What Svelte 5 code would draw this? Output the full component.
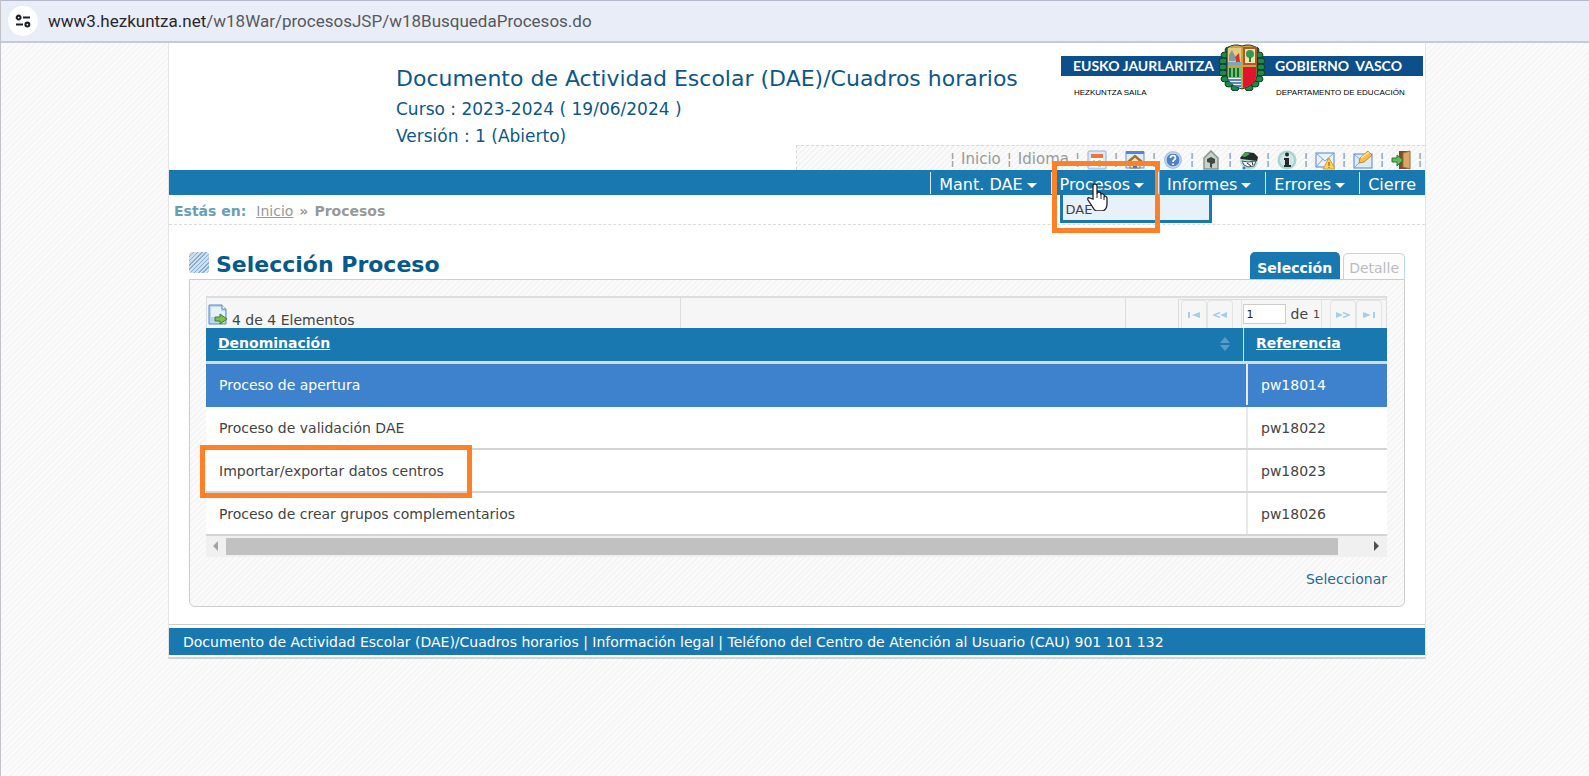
<script>
  const menus = ['Mant. DAE', 'Procesos', 'Informes', 'Errores', 'Cierre'];
  const rows = [
    { name: 'Proceso de apertura', ref: 'pw18014' },
    { name: 'Proceso de validación DAE', ref: 'pw18022' },
    { name: 'Importar/exportar datos centros', ref: 'pw18023' },
    { name: 'Proceso de crear grupos complementarios', ref: 'pw18026' }
  ];
  const tools = ['calendar', 'home', 'help', 'house', 'school', 'info', 'alert', 'edit', 'exit'];
  const laurels = [[9, 7], [5, 12], [3, 18], [3, 24], [3, 30], [5, 36], [9, 41], [15, 45]];
  let selected = $state(0);
</script>

<div class="screen">
  <div class="urlbar">
    <button class="site" aria-label="site">
      <svg width="16" height="14" viewBox="0 0 18 16" fill="none" stroke="#1d1f24" stroke-width="2.4">
        <circle cx="4" cy="4" r="2.2" /><path d="M9 4h8M1 12h8" /><circle cx="14" cy="12" r="2.2" />
      </svg>
    </button>
    <span class="url"><span class="host">www3.hezkuntza.net</span>/w18War/procesosJSP/w18BusquedaProcesos.do</span>
  </div>

  <div class="page">
    <header>
      <div class="titles">
        <h1>Documento de Actividad Escolar (DAE)/Cuadros horarios</h1>
        <p>Curso : 2023-2024 ( 19/06/2024 )</p>
        <p>Versión : 1 (Abierto)</p>
      </div>
      <div class="brand">
        <div class="band"><span>EUSKO JAURLARITZA</span><span>GOBIERNO&nbsp; VASCO</span></div>
        <div class="depts"><span>HEZKUNTZA SAILA</span><span>DEPARTAMENTO DE EDUCACIÓN</span></div>
        <svg class="crest" width="48" height="48" viewBox="0 0 48 48">
          <g fill="#1c8a4a" stroke="#0b3d25" stroke-width="1">
            {#each laurels as [x, y]}
              <ellipse cx={x + 2} cy={y} rx="4" ry="3" /><ellipse cx={46 - x} cy={y} rx="4" ry="3" />
            {/each}
          </g>
          <path d="M9 5Q16 0 24 3Q32 0 39 5V33Q38 42 24 46Q10 42 9 33Z" fill="#c7a544" stroke="#2b3520" />
          <path d="M10 5h13v17H10z" fill="#e3cd80" /><path d="M26 5h12v16H26z" fill="#f0e4b0" stroke="#b5562a" stroke-width="2" />
          <path d="M11 18v-6l3-5 3 6v5z" fill="#84999a" /><path d="M18 19l-1-5 4-4 1 9z" fill="#db3028" /><path d="M10 19h13v3H10z" fill="#7fa4b8" />
          <circle cx="32" cy="11" r="4" fill="#2d9c4c" /><path d="M31 14h2v5h-2z" fill="#2d7c3c" />
          <path d="M10 24h13v11H10z" fill="#7cc06c" /><path d="M12 34v-9m4 9v-9m4 9v-9" stroke="#146d38" stroke-width="2" />
          <path d="M10 35h13v10Q12 42 10 35" fill="#e9f3fa" /><path d="M10 37h13M12 40h11M15 43h8" stroke="#2967a2" stroke-width="1.4" />
          <path d="M25 24h13v10q-1 8-13 11z" fill="#e0142c" />
        </svg>
      </div>
      <div class="tools">
        <span>¦</span><a href="#inicio">Inicio</a><span>¦</span><a href="#idioma">Idioma</a><span>¦</span>
        {#each tools as t}
          <button class="tool" aria-label={t}>
            <svg width="20" height="20" viewBox="0 0 20 20">
              {#if t === 'calendar'}
                <rect x="1" y="1" width="18" height="18" rx="1" fill="#dce9f8" stroke="#8fb0dc" /><rect x="4" y="4" width="12" height="13" fill="#fff" /><rect x="4" y="4" width="12" height="4" fill="#ef753d" /><path d="M6 11h2v5m3-5h3v5h-3z" fill="none" stroke="#6ba873" />
              {:else if t === 'home'}
                <rect x="1" y="2" width="18" height="16" fill="#dfeafa" stroke="#6b91cf" /><path d="M1 1h18v3H1z" fill="#5485d0" /><path d="M5 11v7h10v-7l-5-4z" fill="#f6e4c0" stroke="#8f7652" /><path d="M3 12l7-6 7 6" fill="none" stroke="#a5702f" stroke-width="2.4" /><path d="M8 13h4v5H8z" fill="#487bb9" />
              {:else if t === 'help'}
                <circle cx="10" cy="10" r="9" fill="#a9c5e8" /><circle cx="10" cy="10" r="7" fill="#4f82c6" stroke="#d9e7f8" /><path d="M7.500 8q0-2.500 2.500-2.500T12.500 8q0 1-1.500 2-1 .5-1 2m0 1.500V15" fill="none" stroke="#fff" stroke-width="1.700" />
              {:else if t === 'house'}
                <path d="M3 19V8l7-7 7 7v11z" fill="#c7d1ca" stroke="#86958c" stroke-width="1.500" /><path d="M6 9l4-2 4 2v4l-3 1v4l-2-1v-4l-3-1z" fill="#414743" />
              {:else if t === 'school'}
                <circle cx="10" cy="11" r="9" fill="#b5dde0" /><path d="M1 8l5-6 9 1 4 4-1 4-8-1-8-1z" fill="#242b28" /><path d="M2 6l5-4 4 2-5 3z" fill="#4aa254" /><path d="M3 11l6 1 8-1-2 5-6 1-4-2z" fill="#f3f3ef" stroke="#4a5a5a" /><path d="M8 13l4 3M13 12l1 3" stroke="#333" /><circle cx="5" cy="18" r="1.500" fill="#3d77d0" />
              {:else if t === 'info'}
                <circle cx="10" cy="10" r="9.500" fill="#a9d3d2" /><circle cx="10" cy="10" r="7" fill="#d2e6e4" /><circle cx="10" cy="4.500" r="2" fill="#202b2b" /><path d="M7 8h5v7h2v2H7v-2h1v-5H7z" fill="#202b2b" />
              {:else if t === 'alert'}
                <rect x="1" y="3" width="18" height="14" fill="#e9f2fd" stroke="#5583c5" /><path d="M1 3l9 8 9-8M1 17l7-8m4 0l7 8" fill="none" stroke="#7ba1d2" /><path d="M14 8l6 11H8z" fill="#ffd45b" stroke="#d89a24" /><path d="M14 12v4m0 1v1" stroke="#7a4c00" />
              {:else if t === 'edit'}
                <rect x="1" y="4" width="18" height="14" fill="#dceafa" stroke="#5583c5" /><path d="M2 5l8 7 8-7M2 17l6-6" fill="none" stroke="#8aaedb" /><path d="M6 13l1-5 8-7 4 4-8 7z" fill="#f7bf45" stroke="#c48725" /><path d="M8 8l8-6" stroke="#ffe7a0" stroke-width="1.500" />
              {:else}
                <path d="M8 1h10v18H8z" fill="#7d4d28" /><path d="M12 3l7-2v18l-7-2z" fill="#dca666" stroke="#a36c35" /><path d="M1 8h5V5l6 5-6 6v-4H1z" fill="#5cbf4e" stroke="#2d7934" />
              {/if}
            </svg>
          </button><span class="sep">¦</span>
        {/each}
      </div>
    </header>

    <nav>
      {#each menus as m, i}
        <div class="item">
          <button class="menu">{m}{#if i < 4}<i class="caret"></i>{/if}</button>
          {#if i === 1}
            <a class="sub" href="#dae">DAE</a>
            <div class="mark markmenu"></div>
            <svg class="hand" width="22" height="28" viewBox="0 0 22 28"><path d="M7 16V3q0-2 2-2t2 2v8q0-2 2-2t2 3q0-2 2-1t1 3q2-2 3 1v6q0 5-4 7h-7q-2-1-4-5l-4-6q-1-3 2-2z" fill="#fff" stroke="#222" stroke-width="1.3" /><path d="M11 11v4m4-3v4m3-2v3" stroke="#222" /></svg>
          {/if}
        </div>
      {/each}
    </nav>

    <div class="crumbs"><b class="here">Estás en:</b><a href="#inicio">Inicio</a><b>»</b><b>Procesos</b></div>

    <main>
      <div class="headrow">
        <i class="hatch"></i>
        <h2>Selección Proceso</h2>
        <div class="tabs"><button class="tab on">Selección</button><button class="tab" disabled>Detalle</button></div>
      </div>
      <section class="panel">
        <div class="bar">
          <div class="count">
            <svg width="20" height="21" viewBox="0 0 20 21"><path d="M1 1h13l4 4v15H1z" fill="#b9d6f5" stroke="#5888c4" /><path d="M3 3h10v4h4v6H3z" fill="#e6f1fd" /><path d="M14 1v4h4" fill="#fff" stroke="#5888c4" /><path d="M7 13h5v-3l7 5-7 5v-3H7z" fill="#7fc050" stroke="#39802b" /></svg>
            <span>4 de 4 Elementos</span>
          </div>
          <div class="blank"></div>
          <div class="blank small"></div>
          <div class="pager">
            <button aria-label="first"><svg width="12" height="6" viewBox="0 0 12 6"><path d="M0 0h2v6H0zM12 0v6L4 3z" /></svg></button>
            <button aria-label="previous"><svg width="14" height="6" viewBox="0 0 14 6"><path d="M14 0v6L7 3z" /><path d="M7 0.500L1 3l6 2.500" fill="none" stroke="#a4cfe4" stroke-width="1.500" /></svg></button>
            <label><input aria-label="page" value="1" /> de <small>1</small></label>
            <button aria-label="next"><svg width="14" height="6" viewBox="0 0 14 6"><path d="M0 0v6l7-3z" /><path d="M7 0.500L13 3 7 5.500" fill="none" stroke="#a4cfe4" stroke-width="1.500" /></svg></button>
            <button aria-label="last"><svg width="12" height="6" viewBox="0 0 12 6"><path d="M10 0h2v6h-2zM0 0v6l8-3z" /></svg></button>
          </div>
        </div>
        <div class="thead">
          <a href="#den">Denominación</a>
          <svg width="10" height="14" viewBox="0 0 10 14" fill="#5a9cc9"><path d="M5 0l5 6H0zM5 14l5-6H0z" /></svg>
          <div class="refhead"><a href="#ref">Referencia</a></div>
        </div>
        <table>
          <tbody>
            {#each rows as r, i}
              <tr class:sel={selected === i} onclick={() => (selected = i)}>
                <td>{r.name}{#if i === 2}<div class="mark markrow"></div>{/if}</td>
                <td class="ref">{r.ref}</td>
              </tr>
            {/each}
          </tbody>
        </table>
        <div class="scroll"><i class="arrow left"></i><div class="track"><div class="thumb"></div></div><i class="arrow right"></i></div>
        <div class="actions"><a href="#sel">Seleccionar</a></div>
      </section>
    </main>
    <footer><div>Documento de Actividad Escolar (DAE)/Cuadros horarios | Información legal | Teléfono del Centro de Atención al Usuario (CAU) 901 101 132</div></footer>
  </div>
</div>

<style>
  :global(body) { margin: 0; }
  * { box-sizing: border-box; }
  button { font: inherit; border: 0; padding: 0; background: none; color: inherit; }
  .screen {
    min-height: 100vh;
    border-left: 1px solid #c2c3c9;
    font: 14px/20px "DejaVu Sans", Verdana, sans-serif;
    color: #444;
    background: repeating-linear-gradient(135deg, #fbfbfb 0 2px, #f6f6f6 2px 4px);
  }
  .urlbar { display: flex; align-items: center; gap: 10px; height: 43px; padding: 0 7px 1px; background: #e9edf7; border-top: 1px solid #b5b8cc; border-bottom: 2px solid #c6cad4; }
  .site { display: grid; place-items: center; width: 30px; height: 30px; border-radius: 50%; background: #fff; }
  .url { font: 17px/24px Roboto, "Noto Sans", sans-serif; color: #55585e; }
  .host { color: #26282d; }
  .page { margin: 0 163px 0 167px; background: #fff; border: 1px solid #e4e4e4; border-top: 0; border-bottom: 2px solid #d2d2d2; }
  header { display: grid; grid-template-columns: 1fr 364px; height: 127px; grid-template-rows: 102px 25px; }
  .titles { padding: 22px 0 0 227px; color: #0d5788; white-space: nowrap; }
  h1 { margin: 0 0 3px; font-size: 22px; line-height: 28px; font-weight: 400; }
  p { margin: 0; font-size: 17px; line-height: 27px; }
  .brand { position: relative; padding: 13px 2px 0 0; }
  .band { display: grid; grid-template-columns: 202px 1fr; height: 20px; padding-left: 12px; background: #0d4f8b; color: #fff; font: 700 14px/20px Lato, sans-serif; white-space: nowrap; }
  .depts { display: grid; grid-template-columns: 202px 1fr; padding: 10px 0 0 13px; font: 8px/14px "Liberation Sans", sans-serif; color: #000; white-space: nowrap; }
  .crest { position: absolute; left: 157px; top: 0; }
  .tools { grid-column: 2; justify-self: end; display: flex; align-items: center; justify-content: flex-end; width: 629px; padding-right: 3px; font-size: 15px; line-height: 26px; color: #999; border: 1px dashed #d8d8d8; border-width: 1px 0 0 1px; background: repeating-linear-gradient(135deg, #fbfbfb 0 2px, #f4f4f4 2px 4px); }
  .tools a { color: #999; text-decoration: none; margin: 0 6px; }
  .tools span, .tools a { padding-top: 2px; }
  .tool { display: flex; margin: 4px 7px 0; }
  .sep { width: 4px; display: flex; justify-content: center; }
  nav { display: flex; justify-content: flex-end; height: 25px; background: #1978b0; color: #fff; font-size: 16px; }
  .item { position: relative; display: flex; }
  .item::before { content: ""; width: 1px; margin: 2px 0 1px; background: #d6e8f3; }
  .menu { display: flex; align-items: center; padding: 5px 14px 0 8px; line-height: 20px; }
  .item:last-child .menu { padding-right: 9px; }
  .caret { margin-left: 4px; border: 5px solid transparent; border-top-color: #fff; border-bottom: 0; }
  .sub { position: absolute; left: 9px; top: 25px; width: 152px; height: 28px; padding-left: 3px; border: 3px solid #1978b0; border-top: 0; background: #e6f1fa; color: #444; font-size: 13px; line-height: 29px; text-decoration: none; }
  .mark { position: absolute; border: 5px solid #ff8026; pointer-events: none; }
  .markmenu { left: 1px; top: -9px; width: 108px; height: 72px; }
  .hand { position: absolute; left: 35px; top: 13px; }
  .crumbs { display: flex; gap: 6px; align-items: center; height: 30px; padding: 2px 0 0 5px; border-bottom: 1px dashed #ddd; color: #999; }
  .here { color: #669fb5; margin-right: 4px; }
  .crumbs a { color: #999; }
  main { padding: 27px 20px 17px; }
  .headrow { display: flex; height: 27px; }
  .hatch { width: 20px; height: 21px; margin-right: 7px; border-radius: 3px; background: repeating-linear-gradient(135deg, #88aed4 0 1px, #cfdff0 1px 3px); }
  h2 { margin: 0; font-size: 22px; line-height: 26px; color: #055a8c; }
  .tabs { display: flex; gap: 3px; margin-left: auto; align-items: flex-end; }
  .tab { height: 26px; padding: 3px 5px 0; border: 1px solid #b9d7e9; border-bottom: 0; border-radius: 5px 5px 0 0; background: #fcfcfc; color: #bbb; }
  .tab.on { height: 27px; padding: 3px 7px 0 6px; background: #1978b0; border-color: #1978b0; color: #fff; font-weight: 700; }
  .panel { padding: 16px 17px 17px 16px; border: 1px solid #ccc; border-radius: 0 0 6px 6px; background: repeating-linear-gradient(135deg, #fbfbfb 0 2px, #f5f5f5 2px 4px); }
  .bar { display: flex; height: 32px; background: #f6f6f6; border: 1px solid #ddd; border-top-width: 2px; border-bottom: 0; }
  .count { display: flex; align-items: flex-end; gap: 4px; flex: 474; padding: 0 0 1px 1px; }
  .count span { line-height: 14px; }
  .count svg { margin-bottom: 2px; }
  .blank { flex: 446; border-left: 1px solid #ddd; }
  .blank.small { flex: 52; }
  .pager { display: flex; margin-top: 1px; padding: 0 4px 0 2px; border: 1px solid #ddd; border-width: 1px 0 0 1px; }
  .pager button { display: grid; place-items: center; width: 26px; border: 1px solid #e4e4e4; border-bottom: 0; border-radius: 4px 4px 0 0; fill: #a4cfe4; }
  .pager label { display: flex; align-items: center; gap: 5px; margin: 0 8px; padding: 0 1px; border: 1px solid #e4e4e4; border-width: 0 1px; }
  .pager input { width: 43px; height: 20px; padding: 0 3px; border: 1px solid #ccc; font: 11px "DejaVu Sans", sans-serif; color: #222; background: #fff; }
  small { font-size: 11px; padding-top: 2px; }
  .thead { display: flex; height: 33px; padding-left: 12px; line-height: 30px; background: #1978b0; font-weight: 700; }
  .thead a { color: #fff; }
  .thead svg { margin: 9px 13px 0 auto; }
  .refhead { width: 144px; padding-left: 12px; border-left: 1px solid #cfe2ef; }
  table { width: 100%; border-collapse: collapse; border-top: 3px solid #d6dbe2; background: #fff; }
  td { position: relative; height: 43px; padding: 2px 13px 0; border-bottom: 2px solid #d5d5d5; }
  .ref { width: 140px; border-left: 2px solid #e8e8e8; }
  .sel td { background: #3e82cd; color: #fff; border-bottom-color: #3e82cd; }
  .markrow { left: -6px; top: -5px; width: 272px; height: 53px; }
  .scroll { display: flex; align-items: center; height: 21px; background: #f0f0f0; }
  .track { flex: 1; height: 17px; }
  .thumb { width: calc(100% - 29px); height: 100%; background: #c1c1c1; }
  .arrow { width: 5px; margin: 0 8px 0 7px; border: 5px solid transparent; }
  .left { border-left: 0; border-right-color: #a3a3a3; }
  .right { border-right: 0; border-left-color: #505050; }
  .actions { padding-top: 12px; text-align: right; }
  .actions a { color: #216b98; text-decoration: none; }
  footer { padding: 3px 0 2px; border-top: 1px solid #ccc; }
  footer div { padding: 4px 14px 3px; background: #1978b0; color: #fff; }
</style>
